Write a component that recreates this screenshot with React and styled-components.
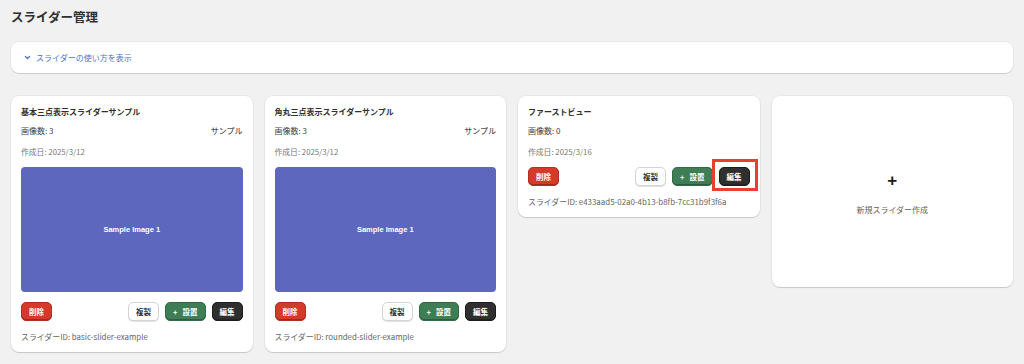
import React from 'react';
import styled, { createGlobalStyle } from 'styled-components';

const GlobalStyle = createGlobalStyle`
  body {
    margin: 0;
    background: #f1f1f1;
    font-family: "Noto Sans CJK JP", "Noto Sans", sans-serif;
    color: #303030;
  }
`;

const Page = styled.div`
  padding: 7px 11px 12px;
`;

const Title = styled.h1`
  margin: 0;
  font-size: 12.5px;
  line-height: 20px;
  font-weight: 700;
  color: #303030;
`;

const InfoBox = styled.div`
  margin-top: 15px;
  height: 31px;
  background: #fff;
  border-radius: 8px;
  box-shadow: 0 1px 1px rgba(0, 0, 0, 0.12), 0 0 0 1px rgba(0, 0, 0, 0.04);
  display: flex;
  align-items: center;
  padding-left: 13px;
  gap: 5px;
  color: #4a74cf;
  font-size: 8px;
`;

const Grid = styled.div`
  margin-top: 23px;
  display: grid;
  grid-template-columns: repeat(4, 1fr);
  gap: 12px;
  align-items: start;
`;

const Card = styled.div`
  background: #fff;
  border-radius: 8px;
  box-shadow: 0 1px 1px rgba(0, 0, 0, 0.14), 0 0 0 1px rgba(0, 0, 0, 0.04);
  padding: 10px;
  display: flex;
  flex-direction: column;
`;

const CardTitle = styled.div`
  font-size: 8px;
  line-height: 11px;
  font-weight: 700;
  color: #303030;
`;

const MetaRow = styled.div`
  margin-top: 8px;
  display: flex;
  justify-content: space-between;
  font-size: 8px;
  line-height: 11px;
  color: #444;
`;

const Tag = styled.span`
  font-weight: 500;
  color: #555;
`;

const DateText = styled.div`
  margin-top: 10px;
  font-size: 7.8px;
  line-height: 11px;
  color: #777;
`;

const Preview = styled.div`
  margin-top: 10px;
  height: 125px;
  border-radius: 4px;
  background: #5c67bd;
  display: flex;
  align-items: center;
  justify-content: center;
  color: #fff;
  font-family: "Liberation Sans", Arial, sans-serif;
  font-weight: 700;
  font-size: 7.5px;
`;

const Actions = styled.div`
  margin-top: 10px;
  display: flex;
  gap: 6px;
  align-items: center;
`;

const Spacer = styled.div`
  flex: 1;
`;

const palette = {
  red: { bg: '#d4392a', fg: '#fff', border: '#b22c1f' },
  white: { bg: '#fff', fg: '#303030', border: '#d4d4d4' },
  green: { bg: '#3f7e55', fg: '#fff', border: '#336a46' },
  dark: { bg: '#2f2f2f', fg: '#fff', border: '#1c1c1c' },
};

const Button = styled.button`
  height: 19px;
  min-width: 30px;
  padding: 0 7px;
  border-radius: 5px;
  border: 1px solid ${p => palette[p.$kind].border};
  background: ${p => palette[p.$kind].bg};
  color: ${p => palette[p.$kind].fg};
  font-family: "Noto Sans CJK JP", sans-serif;
  font-size: 7.5px;
  font-weight: 700;
  display: inline-flex;
  align-items: center;
  justify-content: center;
  gap: 5px;
  box-shadow: ${p => (p.$kind === 'white' ? '0 1px 0 rgba(0,0,0,0.12)' : 'inset 0 -1px 0 rgba(0,0,0,0.25)')};
  cursor: pointer;
`;

const Highlight = styled.span`
  position: relative;
  display: inline-flex;
  &::after {
    content: '';
    position: absolute;
    left: -7px;
    right: -8px;
    top: -8px;
    bottom: -5px;
    border: 3px solid #e9402d;
    pointer-events: none;
  }
`;

const SliderId = styled.div`
  margin-top: 10px;
  font-size: 7.9px;
  line-height: 11px;
  color: #666;
`;

const NewCard = styled(Card)`
  height: 191px;
  box-sizing: border-box;
  align-items: center;
  justify-content: center;
  padding-top: 14px;
`;

const Plus = styled.div`
  font-size: 17px;
  line-height: 17px;
  font-weight: 700;
  color: #1a1a1a;
  font-family: "Liberation Sans", Arial, sans-serif;
`;

const NewLabel = styled.div`
  margin-top: 15px;
  font-size: 8px;
  color: #616161;
`;

const Chevron = () => (
  <svg width="7" height="7" viewBox="0 0 10 10">
    <path d="M2 3.5 L5 6.5 L8 3.5" fill="none" stroke="#4a74cf" strokeWidth="1.8" strokeLinecap="round" strokeLinejoin="round" />
  </svg>
);

const sliders = [
  { title: '基本三点表示スライダーサンプル', count: 3, sample: true, date: '2025/3/12', id: 'basic-slider-example' },
  { title: '角丸三点表示スライダーサンプル', count: 3, sample: true, date: '2025/3/12', id: 'rounded-slider-example' },
  { title: 'ファーストビュー', count: 0, sample: false, date: '2025/3/16', id: 'e433aad5-02a0-4b13-b8fb-7cc31b9f3f6a', highlight: true },
];

const SliderCard = ({ s }) => {
  const edit = <Button $kind="dark">編集</Button>;
  return (
    <Card>
      <CardTitle>{s.title}</CardTitle>
      <MetaRow>
        <span>画像数: {s.count}</span>
        {s.sample && <Tag>サンプル</Tag>}
      </MetaRow>
      <DateText>作成日: {s.date}</DateText>
      {s.count > 0 && <Preview>Sample Image 1</Preview>}
      <Actions>
        <Button $kind="red">削除</Button>
        <Spacer />
        <Button $kind="white">複製</Button>
        <Button $kind="green"><span>+</span>設置</Button>
        {s.highlight ? <Highlight>{edit}</Highlight> : edit}
      </Actions>
      <SliderId>スライダーID: {s.id}</SliderId>
    </Card>
  );
};

export default function App() {
  return (
    <>
      <GlobalStyle />
      <Page>
        <Title>スライダー管理</Title>
        <InfoBox>
          <Chevron />
          <span>スライダーの使い方を表示</span>
        </InfoBox>
        <Grid>
          {sliders.map(s => <SliderCard key={s.id} s={s} />)}
          <NewCard>
            <Plus>+</Plus>
            <NewLabel>新規スライダー作成</NewLabel>
          </NewCard>
        </Grid>
      </Page>
    </>
  );
}
